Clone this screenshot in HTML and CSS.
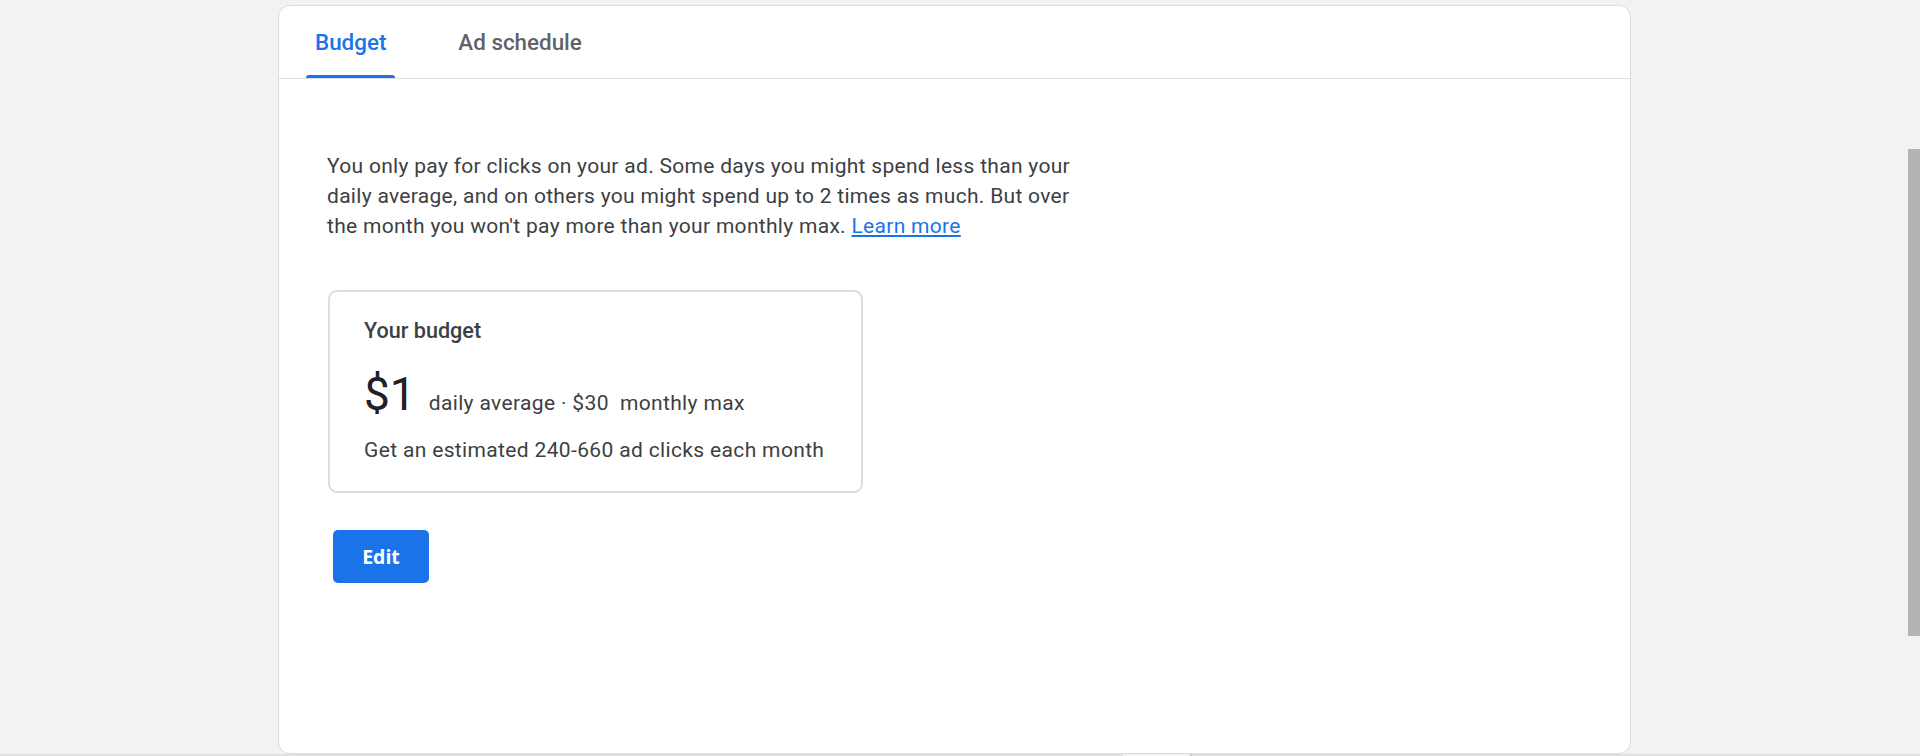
FILE: index.html
```html
<!DOCTYPE html>
<html lang="en">
<head>
<meta charset="utf-8">
<title>Budget</title>
<link rel="stylesheet" href="styles.css">
</head>
<body>
<div class="panel">
  <div class="tabs">
    <div class="tab active">Budget</div>
    <div class="tab">Ad schedule</div>
  </div>
  <div class="content">
    <p class="intro">You only pay for clicks on your ad. Some days you might spend less than your daily average, and on others you might spend up to 2 times as much. But over the month you won't pay more than your monthly max. <a href="#" class="link">Learn more</a></p>
    <div class="budget-box">
      <div class="budget-title">Your budget</div>
      <div class="budget-row">
        <span class="amount">$1</span>
        <span class="amount-label">daily average · $30&nbsp; monthly max</span>
      </div>
      <div class="estimate">Get an estimated 240-660 ad clicks each month</div>
    </div>
    <button class="edit-btn">Edit</button>
  </div>
</div>
<div class="scroll-thumb"></div>
<div class="bottom-bar"><span class="bottom-seg"></span></div>
</body>
</html>
```

FILE: styles.css
```css
html, body {
  margin: 0;
  padding: 0;
  height: 100%;
  overflow: hidden;
}
body {
  background: #f1f2f4;
  font-family: Roboto, "Liberation Sans", Arial, sans-serif;
  color: #3c4043;
}
.panel {
  margin: 5px 0 0 278px;
  width: 1351px;
  height: 747px;
  background: #fff;
  border: 1px solid #dadce0;
  border-radius: 12px;
}
.tabs {
  display: flex;
  gap: 54px;
  padding-left: 27px;
  height: 72px;
  border-bottom: 1px solid #dadce0;
}
.tab {
  display: flex;
  align-items: center;
  padding: 0 9px;
  font-size: 22.4px;
  font-weight: 500;
  color: #5f6368;
  position: relative;
}
.tab.active {
  color: #1a73e8;
}
.tab.active::after {
  content: "";
  position: absolute;
  left: 0;
  right: 0;
  bottom: 0;
  height: 3px;
  background: #1a73e8;
  border-radius: 3px 3px 0 0;
}
.content {
  padding: 72px 0 0 48px;
}
.intro {
  margin: 0;
  width: 760px;
  font-size: 21px;
  line-height: 30px;
  letter-spacing: 0.3px;
  color: #3c4043;
}
.link {
  color: #1a73e8;
  text-decoration: underline;
}
.budget-box {
  margin-top: 49px;
  margin-left: 1px;
  width: 497px;
  padding: 26px 0 28px 34px;
  border: 2px solid #dadce0;
  border-radius: 9px;
}
.budget-title {
  font-size: 21.6px;
  font-weight: 500;
  line-height: 26px;
  color: #3c4043;
}
.budget-row {
  display: flex;
  align-items: baseline;
  gap: 13px;
  margin-top: 24px;
}
.amount {
  font-size: 46px;
  line-height: 52px;
  color: #202124;
}
.amount-label {
  font-size: 21px;
  letter-spacing: 0.35px;
}
.estimate {
  margin-top: 17px;
  font-size: 21px;
  line-height: 26px;
  letter-spacing: 0.35px;
}
.edit-btn {
  display: block;
  margin: 37px 0 0 6px;
  width: 96px;
  height: 53px;
  border: 0;
  border-radius: 5px;
  background: #1a73e8;
  color: #fff;
  font-family: "Open Sans", Roboto, sans-serif;
  font-size: 19.5px;
  font-weight: 700;
}
.scroll-thumb {
  position: fixed;
  right: 0;
  top: 149px;
  width: 12px;
  height: 487px;
  background: #b3b4b6;
}
.bottom-bar {
  position: fixed;
  left: 0;
  right: 0;
  bottom: 0;
  height: 2px;
  background: #e0e0e0;
}
.bottom-seg {
  position: absolute;
  left: 1123px;
  width: 67px;
  top: 0;
  bottom: 0;
  background: #f3f3f3;
  border-right: 2px solid #c8c8c8;
}
```
